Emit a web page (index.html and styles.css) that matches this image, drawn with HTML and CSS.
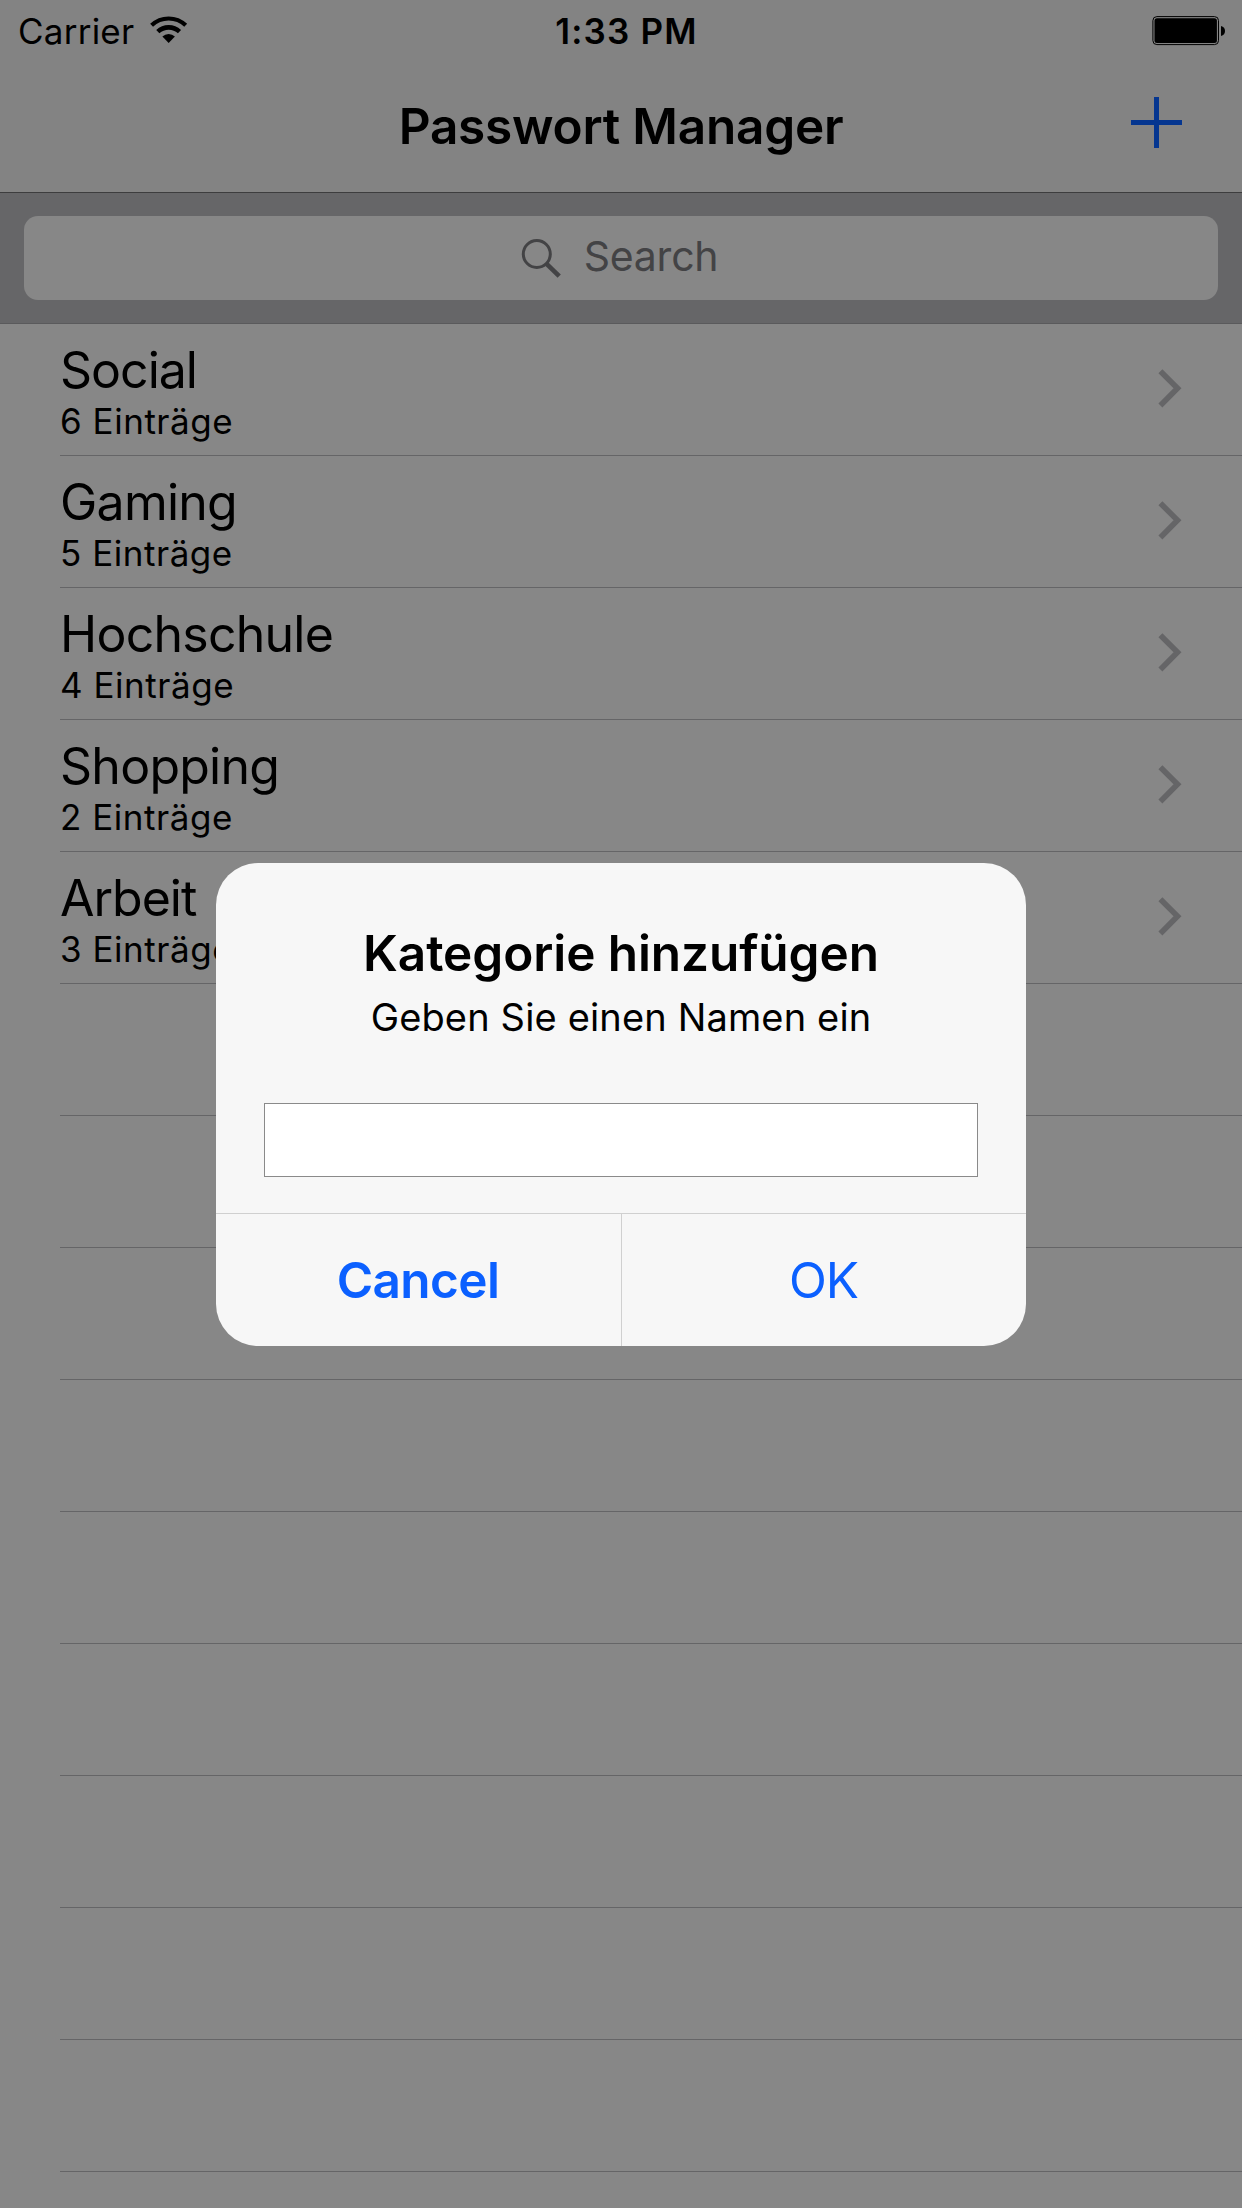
FILE: index.html
```html
<!DOCTYPE html>
<html lang="de">
<head>
<meta charset="utf-8">
<title>Passwort Manager</title>
<link rel="stylesheet" href="styles.css">
</head>
<body>
<div class="screen">
  <header class="header">
    <div class="status">
      <div class="status-left">
        <span class="carrier">Carrier</span>
        <svg class="wifi" width="38" height="28" viewBox="0 0 38 28">
          <path d="M1.6 9.3A24.8 24.8 0 0 1 35.7 9.3" fill="none" stroke="#000" stroke-width="4.2"/>
          <path d="M7.8 15.6A16 16 0 0 1 29.5 15.6" fill="none" stroke="#000" stroke-width="4.6"/>
          <path d="M12.4 20.6A9 9 0 0 1 24.9 20.6L18.65 27Z"/>
        </svg>
      </div>
      <span class="time">1:33 PM</span>
      <svg class="battery" width="74" height="30" viewBox="0 0 74 30">
        <rect x="0.9" y="0.6" width="65.6" height="28" rx="4" fill="none" stroke="#000" stroke-width="1"/>
        <rect x="2.5" y="2.2" width="62.4" height="24.8" rx="2.5"/>
        <path d="M69 10Q73 11 73 15T69 20Z"/>
      </svg>
    </div>
    <div class="nav">
      <h1 class="nav-title">Passwort Manager</h1>
      <svg class="add" width="51" height="51" viewBox="0 0 51 51">
        <path d="M25.5 0V51M0 25.5H51" stroke="#053690" stroke-width="5"/>
      </svg>
    </div>
  </header>

  <div class="search-bar">
    <div class="search-field">
      <svg class="search-icon" width="40" height="40" viewBox="0 0 40 40">
        <circle cx="15.8" cy="15" r="13.5" fill="none" stroke="#434345" stroke-width="3"/>
        <path d="M25.6 24.8L38.2 37.2" stroke="#434345" stroke-width="4.6"/>
      </svg>
      <span class="search-label">Search</span>
    </div>
  </div>

  <ul class="list">
    <li class="row"><div class="cell"><div><div class="name name-tight">Social</div><div class="count">6 Einträge</div></div><svg class="chevron" width="24" height="40" viewBox="0 0 24 40"><path d="M2.4 2.2L19.5 19.3L2.4 36.4"/></svg></div></li>
    <li class="row"><div class="cell"><div><div class="name">Gaming</div><div class="count">5 Einträge</div></div><svg class="chevron" width="24" height="40" viewBox="0 0 24 40"><path d="M2.4 2.2L19.5 19.3L2.4 36.4"/></svg></div></li>
    <li class="row"><div class="cell"><div><div class="name">Hochschule</div><div class="count">4 Einträge</div></div><svg class="chevron" width="24" height="40" viewBox="0 0 24 40"><path d="M2.4 2.2L19.5 19.3L2.4 36.4"/></svg></div></li>
    <li class="row"><div class="cell"><div><div class="name">Shopping</div><div class="count">2 Einträge</div></div><svg class="chevron" width="24" height="40" viewBox="0 0 24 40"><path d="M2.4 2.2L19.5 19.3L2.4 36.4"/></svg></div></li>
    <li class="row"><div class="cell"><div><div class="name name-tight">Arbeit</div><div class="count">3 Einträge</div></div><svg class="chevron" width="24" height="40" viewBox="0 0 24 40"><path d="M2.4 2.2L19.5 19.3L2.4 36.4"/></svg></div></li>
    <li class="row"><div class="cell"></div></li>
    <li class="row"><div class="cell"></div></li>
    <li class="row"><div class="cell"></div></li>
    <li class="row"><div class="cell"></div></li>
    <li class="row"><div class="cell"></div></li>
    <li class="row"><div class="cell"></div></li>
    <li class="row"><div class="cell"></div></li>
    <li class="row"><div class="cell"></div></li>
    <li class="row"><div class="cell"></div></li>
  </ul>
</div>

<div class="overlay">
  <div class="alert" role="dialog">
    <div class="alert-body">
      <h2 class="alert-title">Kategorie hinzufügen</h2>
      <p class="alert-message">Geben Sie einen Namen ein</p>
      <input class="alert-input" type="text">
    </div>
    <div class="alert-actions">
      <button class="action action-cancel">Cancel</button>
      <button class="action action-ok">OK</button>
    </div>
  </div>
</div>
</body>
</html>
```
FILE: styles.css
```css
* { box-sizing: border-box; margin: 0; padding: 0; }

body {
  font-family: Inter, "Liberation Sans", sans-serif;
  color: #000;
  background: #878787;
}

svg { display: block; }

.screen {
  width: 1242px;
  height: 2208px;
  overflow: hidden;
}

.header {
  height: 193px;
  background: #838383;
  border-bottom: 1px solid #3d3d3e;
}

.status {
  display: grid;
  grid-template-columns: 1fr auto 1fr;
  height: 60px;
  padding: 0 16px 0 18px;
  font-size: 35px;
  line-height: 62px;
}

.status-left { display: flex; gap: 16px; }
.carrier { letter-spacing: 0.24px; }
.wifi { margin-top: 16px; }
.time { font-weight: 600; letter-spacing: 1.2px; padding-left: 9px; }
.battery { justify-self: end; margin-top: 16px; }

.nav {
  display: grid;
  grid-template-columns: 1fr auto 1fr;
  height: 132px;
  padding: 0 60px;
}

.nav-title {
  grid-column: 2;
  font-size: 49.5px;
  font-weight: 600;
  line-height: 132px;
  letter-spacing: -0.23px;
}

.add { justify-self: end; margin-top: 37px; }

.search-bar {
  height: 131px;
  padding: 23px 24px;
  background: #666668;
  border-bottom: 1px solid #5a5a5c;
}

.search-field {
  display: flex;
  justify-content: center;
  gap: 23px;
  height: 84px;
  padding-right: 3px;
  border-radius: 14px;
  background: #878787;
}

.search-icon { margin-top: 23px; }

.search-label {
  font-size: 41px;
  line-height: 80px;
  letter-spacing: -0.22px;
  color: #434345;
}

.list { list-style: none; }
.row { padding-left: 60px; }

.cell {
  display: flex;
  justify-content: space-between;
  height: 132px;
  padding: 21px 60px 0 0;
  border-bottom: 1px solid #656567;
}

.name {
  font-size: 50px;
  line-height: 50px;
  letter-spacing: -0.75px;
}

.name-tight { letter-spacing: -1px; }

.count {
  margin-top: 5px;
  font-size: 35px;
  line-height: 42px;
  letter-spacing: 0.53px;
}

.chevron { margin-top: 24px; }
.chevron path { fill: none; stroke: #656567; stroke-width: 5.6; }

.overlay {
  position: absolute;
  inset: 0;
  height: 2208px;
  display: flex;
  align-items: center;
  justify-content: center;
  padding-top: 1px;
}

.alert {
  width: 810px;
  height: 483px;
  border-radius: 42px;
  background: #f7f7f7;
  overflow: hidden;
}

.alert-body {
  height: 351px;
  padding: 60px 48px 0;
  border-bottom: 1px solid #d0d0d0;
  text-align: center;
}

.alert-title {
  font-size: 49.5px;
  font-weight: 600;
  line-height: 60px;
  letter-spacing: -0.08px;
}

.alert-message {
  margin-top: 9px;
  font-size: 38px;
  line-height: 50px;
  letter-spacing: 0.15px;
}

.alert-input {
  display: block;
  width: 714px;
  height: 74px;
  margin-top: 61px;
  border: 1px solid #8a8a8a;
  background: #fff;
  outline: 0;
}

.alert-actions { display: flex; height: 132px; }

.action {
  height: 132px;
  border: 0;
  background: none;
  font-family: inherit;
  font-size: 49.5px;
  line-height: 132px;
  color: #0b60ff;
}

.action-cancel {
  width: 406px;
  padding-right: 1px;
  border-right: 1px solid #d0d0d0;
  font-weight: 600;
  letter-spacing: -0.6px;
}

.action-ok {
  width: 404px;
  padding-right: 1px;
  letter-spacing: -1.1px;
}
```
